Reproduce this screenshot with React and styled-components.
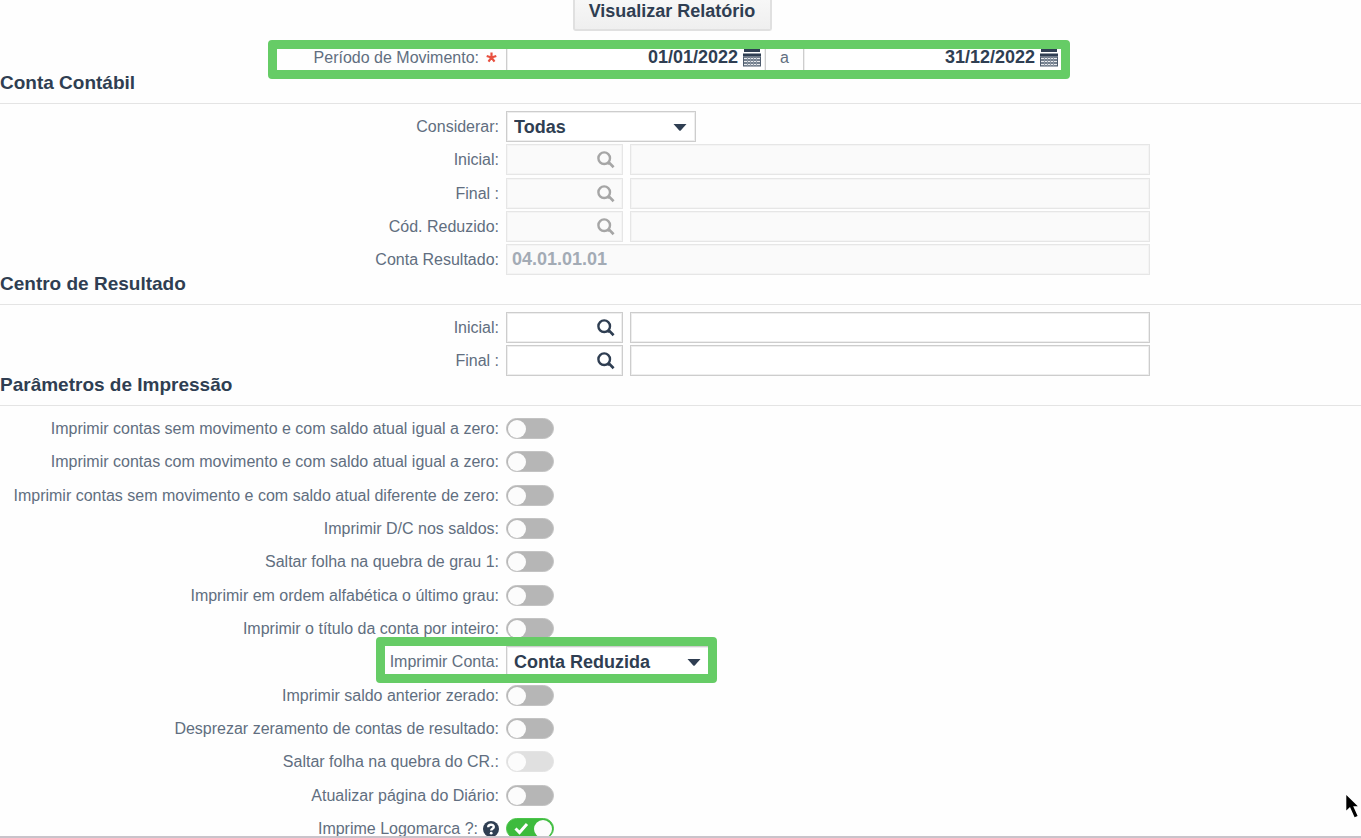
import React, { useState } from "react";
import styled, { createGlobalStyle, css } from "styled-components";

const ink = "#2f3e52";
const muted = "#616e80";
const green = "#66cc66";

const GlobalStyle = createGlobalStyle`
  *, *::before, *::after { box-sizing: border-box; }
  body {
    margin: 0;
    background: #fefefe;
    color: ${ink};
    font-family: "Liberation Sans", Arial, sans-serif;
    font-size: 16px;
  }
`;

const Page = styled.main`
  height: 100vh;
  overflow: hidden;
  border-bottom: 2px solid #c9c3ca;
`;

const Toolbar = styled.header`
  display: flex;
  justify-content: center;
  padding-right: 17px;
  margin-bottom: 10px;
`;

const ReportButton = styled.button`
  width: 199px;
  height: 31px;
  padding: 0 0 8px;
  border: 2px solid #e0e0e0;
  border-top: 0;
  border-radius: 0 0 3px 3px;
  background: linear-gradient(#f7f7f7, #efefef);
  color: ${ink};
  font: bold 18px/20px "Liberation Sans", Arial, sans-serif;
  white-space: nowrap;
`;

const SectionTitle = styled.h2`
  margin: 0;
  padding-bottom: 13px;
  border-bottom: 1px solid #e4e4e4;
  font-size: 19px;
  line-height: 14px;
  font-weight: bold;
`;

const Rows = styled.div`
  padding: ${(p) => (p.$flush ? "0 0 2px" : "6px 0 0")};
`;

const Row = styled.div`
  position: relative;
  display: grid;
  grid-template-columns: 499px minmax(0, 644px);
  column-gap: 7px;
  height: 33px;
  padding-top: 1px;
  &:nth-child(3n + 2) { height: 34px; }
`;

const LabelCell = styled.div`
  display: flex;
  align-items: center;
  justify-content: flex-end;
  height: 31px;
  gap: 5px;
  color: ${muted};
  white-space: nowrap;
`;

const Required = styled.span`
  display: flex;
  padding: 0 2px;
`;

const Controls = styled.div`
  display: flex;
  align-items: center;
  height: 31px;
  gap: ${(p) => p.$gap || 0}px;
`;

const Frame = styled.div`
  display: flex;
  align-items: center;
  height: 31px;
  flex: ${(p) => (p.$width ? `0 0 ${p.$width}px` : "1 1 0")};
  min-width: 0;
  border: 1px solid ${(p) => (p.$off ? "#e6e6e6" : "#cdcdcd")};
  outline: 1px solid ${(p) => (p.$off ? "#f4f4f4" : "#eeeeee")};
  outline-offset: -2px;
  background: ${(p) => (p.$off ? "#fafafa" : "#ffffff")};
`;

const TextInput = styled.input`
  flex: 1;
  width: 0;
  height: 29px;
  padding: 0 5px;
  border: 0;
  outline: 0;
  background: transparent;
  color: ${ink};
  font: bold 18px/20px "Liberation Sans", Arial, sans-serif;
  text-align: ${(p) => p.$align || "left"};
  &:disabled { color: #a3abb5; }
`;

const IconButton = styled.button`
  display: flex;
  padding: 0;
  margin-right: ${(p) => p.$end}px;
  border: 0;
  background: none;
  color: ${ink};
  &:disabled { color: #a6a6a6; }
`;

const Joiner = styled.span`
  width: 37px;
  text-align: center;
  color: ${muted};
`;

const SelectFrame = styled(Frame)`
  position: relative;
`;

const Select = styled.select`
  appearance: none;
  width: 100%;
  height: 29px;
  padding: 0 28px 0 7px;
  border: 0;
  outline: 0;
  background: transparent;
  color: ${ink};
  font: bold 18px/20px "Liberation Sans", Arial, sans-serif;
`;

const Caret = styled.svg`
  position: absolute;
  right: 8px;
  top: 12px;
  pointer-events: none;
`;

const Switch = styled.input`
  appearance: none;
  display: grid;
  align-items: center;
  width: 48px;
  height: 21px;
  margin: 0;
  padding: 0 1px;
  border: 1px solid #c3c3c3;
  border-radius: 11px;
  background: #b6b6b6;
  &::before {
    content: "";
    width: 18px;
    height: 18px;
    border-radius: 50%;
    background: #fcfcfc;
  }
  &:disabled {
    border-color: #e4e4e4;
    background: #e0e0e0;
  }
  &:checked {
    border-color: #4cc44c;
    background: #3dbb3d;
  }
  &:checked::before { justify-self: end; }
`;

const SwitchBox = styled.span`
  position: relative;
  display: flex;
`;

const Check = styled.svg`
  position: absolute;
  left: 8px;
  top: 4px;
  pointer-events: none;
`;

const Highlight = styled.div`
  position: absolute;
  z-index: 2;
  border: 9px solid ${green};
  border-radius: 4px;
  pointer-events: none;
  ${(p) =>
    p.$period
      ? css`left: 268px; width: 802px; top: -1px; height: 39px;`
      : css`left: 376px; width: 341px; top: -8px; height: 46px;`}
`;

const Pointer = styled.svg`
  position: fixed;
  right: 2px;
  bottom: 19px;
  z-index: 3;
`;

const SearchIcon = () => (
  <svg width="18" height="18" viewBox="0 0 18 18" fill="none" stroke="currentColor" aria-hidden="true">
    <circle cx="7.2" cy="7.2" r="5.8" strokeWidth="2.4" />
    <path d="M10.6 12.4h2.2l3.8 3.8" strokeWidth="2.7" />
  </svg>
);

const CalendarIcon = () => (
  <svg width="18" height="19" viewBox="0 0 18 19" aria-hidden="true">
    <path d="M1 1h16v3H1zM0 5.5h18v3H0z" fill="currentColor" />
    <path d="M0 8.5h18v10H0z" fill="#4d5b6d" />
    <path d="M1 10.5h16M1 13.5h16M1 16.5h16" stroke="#e8eaed" strokeWidth="1.4" />
    <path d="M4.5 9v9M7.5 9v9M10.5 9v9M13.5 9v9" stroke="#8b96a3" strokeWidth="1" />
  </svg>
);

const HelpIcon = () => (
  <svg width="16" height="16" viewBox="0 0 16 16" aria-hidden="true">
    <circle cx="8" cy="8" r="8" fill={ink} />
    <path d="M5.2 6.2C5.2 3 10.8 3 10.8 6c0 1.8-2.6 1.7-2.6 3.4" fill="none" stroke="#fff" strokeWidth="2.4" />
    <circle cx="8.2" cy="12.2" r="1.4" fill="#fff" />
  </svg>
);

function DateField({ id, label, initial }) {
  const [value, setValue] = useState(initial);
  return (
    <Frame $width={260}>
      <TextInput id={id} aria-label={label} $align="right" value={value} onChange={(e) => setValue(e.target.value)} />
      <IconButton $end={4} type="button" aria-label="Abrir calendário">
        <CalendarIcon />
      </IconButton>
    </Frame>
  );
}

function Dropdown({ id, label, options, width, children }) {
  return (
    <Row>
      <LabelCell>
        <label htmlFor={id}>{label}</label>
      </LabelCell>
      <Controls>
        <SelectFrame $width={width}>
          <Select id={id}>
            {options.map((o) => (
              <option key={o}>{o}</option>
            ))}
          </Select>
          <Caret width="14" height="7" viewBox="0 0 14 7" aria-hidden="true">
            <path d="M0.5 0h13L7.5 6.7h-1z" fill={ink} />
          </Caret>
        </SelectFrame>
      </Controls>
      {children}
    </Row>
  );
}

function Lookup({ id, label, disabled }) {
  return (
    <Row>
      <LabelCell>
        <label htmlFor={id}>{label}</label>
      </LabelCell>
      <Controls $gap={7}>
        <Frame $width={117} $off={disabled}>
          <TextInput id={id} disabled={disabled} />
          <IconButton $end={7} type="button" aria-label={`Pesquisar ${label}`} disabled={disabled}>
            <SearchIcon />
          </IconButton>
        </Frame>
        <Frame $off={disabled}>
          <TextInput aria-label={`Descrição ${label}`} disabled={disabled} />
        </Frame>
      </Controls>
    </Row>
  );
}

function Toggle({ id, label, disabled, initial = false, help }) {
  const [on, setOn] = useState(initial);
  return (
    <Row>
      <LabelCell>
        <label htmlFor={id}>{label}</label>
        {help && (
          <IconButton $end={0} type="button" aria-label="Ajuda">
            <HelpIcon />
          </IconButton>
        )}
      </LabelCell>
      <Controls>
        <SwitchBox>
          <Switch id={id} type="checkbox" disabled={disabled} checked={on} onChange={() => setOn(!on)} />
          {on && (
            <Check width="15" height="13" viewBox="0 0 15 13" aria-hidden="true">
              <path d="M1.5 6.5l4 4L13 2" fill="none" stroke="#fff" strokeWidth="3" />
            </Check>
          )}
        </SwitchBox>
      </Controls>
    </Row>
  );
}

const togglesBefore = [
  "Imprimir contas sem movimento e com saldo atual igual a zero:",
  "Imprimir contas com movimento e com saldo atual igual a zero:",
  "Imprimir contas sem movimento e com saldo atual diferente de zero:",
  "Imprimir D/C nos saldos:",
  "Saltar folha na quebra de grau 1:",
  "Imprimir em ordem alfabética o último grau:",
  "Imprimir o título da conta por inteiro:",
];

const togglesAfter = [
  { label: "Imprimir saldo anterior zerado:" },
  { label: "Desprezar zeramento de contas de resultado:" },
  { label: "Saltar folha na quebra do CR.:", disabled: true },
  { label: "Atualizar página do Diário:" },
  { label: "Imprime Logomarca ?:", initial: true, help: true },
];

export default function App() {
  return (
    <>
      <GlobalStyle />
      <Page>
        <Toolbar>
          <ReportButton type="button">Visualizar Relatório</ReportButton>
        </Toolbar>

        <Rows $flush>
          <Row>
            <LabelCell>
              <label htmlFor="data-inicial">Período de Movimento:</label>
              <Required>
                <svg width="11" height="11" viewBox="0 0 11 11" aria-hidden="true">
                  <path d="M5.5 5.5V0.5M5.5 5.5L10.3 4M5.5 5.5L8.5 9.7M5.5 5.5L2.5 9.7M5.5 5.5L0.7 4" stroke="#e8503f" strokeWidth="2.2" />
                </svg>
              </Required>
            </LabelCell>
            <Controls>
              <DateField id="data-inicial" initial="01/01/2022" />
              <Joiner>a</Joiner>
              <DateField id="data-final" label="Data final" initial="31/12/2022" />
            </Controls>
            <Highlight $period />
          </Row>
        </Rows>

        <SectionTitle>Conta Contábil</SectionTitle>
        <Rows>
          <Dropdown id="considerar" label="Considerar:" options={["Todas"]} width={190} />
          <Lookup id="conta-inicial" label="Inicial:" disabled />
          <Lookup id="conta-final" label="Final :" disabled />
          <Lookup id="cod-reduzido" label="Cód. Reduzido:" disabled />
          <Row>
            <LabelCell>
              <label htmlFor="conta-resultado">Conta Resultado:</label>
            </LabelCell>
            <Controls>
              <Frame $off>
                <TextInput id="conta-resultado" disabled defaultValue="04.01.01.01" />
              </Frame>
            </Controls>
          </Row>
        </Rows>

        <SectionTitle>Centro de Resultado</SectionTitle>
        <Rows>
          <Lookup id="centro-inicial" label="Inicial:" />
          <Lookup id="centro-final" label="Final :" />
        </Rows>

        <SectionTitle>Parâmetros de Impressão</SectionTitle>
        <Rows>
          {togglesBefore.map((label, i) => (
            <Toggle key={label} id={`opcao-${i}`} label={label} />
          ))}
          <Dropdown id="imprimir-conta" label="Imprimir Conta:" options={["Conta Reduzida"]} width={204}>
            <Highlight />
          </Dropdown>
          {togglesAfter.map((t, i) => (
            <Toggle key={t.label} id={`extra-${i}`} {...t} />
          ))}
        </Rows>
      </Page>
      <Pointer width="14" height="25" viewBox="0 0 14 25" aria-hidden="true">
        <path d="M1.3 1v15.5l3.7-3.5 4.6 10.3 3-1.2-4.4-9.8h4.6z" fill="#000" />
      </Pointer>
    </>
  );
}
